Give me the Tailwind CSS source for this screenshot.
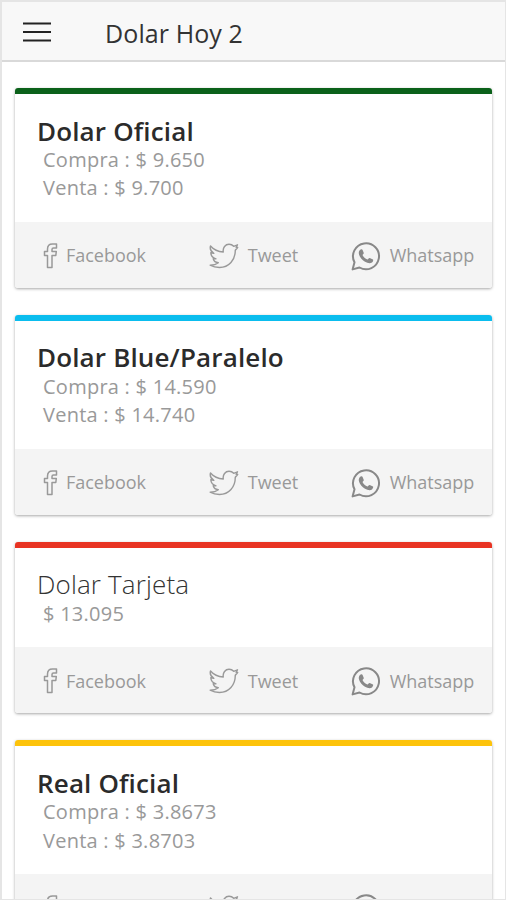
<!DOCTYPE html>
<html lang="es">
<head>
    <meta charset="UTF-8">
    <meta name="viewport" content="width=device-width, initial-scale=1.0">
    <title>Dolar Hoy 2</title>
    <script src="https://cdn.jsdelivr.net/npm/@tailwindcss/browser@4"></script>
</head>
<body class="bg-white font-['Open_Sans','Noto_Sans',sans-serif]">
    <!-- Icons -->
    <svg class="hidden">
        <symbol id="facebook" viewBox="0 0 15 26">
            <path d="M4.500 24.500V12.500H1.500V8.500H4.500V6C4.500 2.500 6.500 1 9.500 1H13.500V5H10.500C9.500 5 9 5.500 9 6.500V8.500H13.300L12.800 12.500H9V24.500Z" fill="none" stroke="currentColor" stroke-width="1.500" stroke-linejoin="round"/>
        </symbol>
        <symbol id="twitter" viewBox="0 0 30 26">
            <path d="M1.500 3C5 7 9.500 8.700 14.300 9C13.500 4.500 16.500 1.300 20 1.300C22 1.300 23.500 2 24.700 3.300L28.500 1.800L27.200 4.400L28.700 4.500L26.300 7.300C26.300 17 20 24.500 10.500 24.500C7 24.500 4 23.800 1.200 22.200C4.700 22.200 7.200 21.500 9.300 19.800C6.500 19.500 4.800 18 4.200 15.800H7C3.500 14.800 2 12.800 1.800 9.800L4.800 10.400C1.800 8.500 0.700 6 1.500 3Z" fill="none" stroke="currentColor" stroke-width="1.400" stroke-linejoin="round"/>
        </symbol>
        <symbol id="whatsapp" viewBox="0 0 30 30">
            <path d="M1.600 28.400L3.500 21.300A13 13 0 1 1 8.500 26.500Z" fill="none" stroke="currentColor" stroke-width="2" stroke-linejoin="round"/>
            <path d="M8.300 9.800C9.300 8 11 7.800 11.500 8.800L12.800 12C12.900 12.700 12 13.500 11.500 14C12.500 16 14.200 17.700 16.500 18.600C17.300 18 18 16.800 18.700 17L22 18.600C22.500 19 22 20.700 21 21.400C19 22.800 16.500 22 14 20.700C11 19 8.800 16 8 13.500C7.700 12 7.700 11 8.300 9.800Z" fill="currentColor"/>
        </symbol>
    </svg>

    <div class="h-screen flex flex-col overflow-hidden border-t-2 border-l-2 border-r border-b border-[#e5e5e5]">
        <!-- Header -->
        <header class="shrink-0 h-[60px] flex items-center bg-[#f8f8f8] border-b-2 border-[#d9d9d9] pl-[21px]">
            <svg class="w-7 h-5 mt-0.5 text-[#222]" viewBox="0 0 28 20">
                <path d="M0 1.500H28M0 10H28M0 18.500H28" stroke="currentColor" stroke-width="2.200"/>
            </svg>
            <h1 class="ml-[54px] pt-1.5 text-[25px] tracking-[0.1px] text-[#333]">Dolar Hoy 2</h1>
        </header>

        <!-- Quotes -->
        <main id="cards" class="flex flex-col gap-[27px] pt-[26px] pl-[13px] pr-[13px]"></main>
    </div>

    <script>
        const quotes = [
            { title: 'Dolar Oficial', bar: 'border-[#0b611a]', weight: 'font-semibold text-[#2b2b2b]', lines: ['Compra : $ 9.650', 'Venta : $ 9.700'] },
            { title: 'Dolar Blue/Paralelo', bar: 'border-[#0bbdee]', weight: 'font-semibold text-[#2b2b2b]', lines: ['Compra : $ 14.590', 'Venta : $ 14.740'] },
            { title: 'Dolar Tarjeta', bar: 'border-[#e83323]', weight: 'font-light text-[#333]', lines: ['$ 13.095'] },
            { title: 'Real Oficial', bar: 'border-[#fdc30b]', weight: 'font-semibold text-[#2b2b2b]', lines: ['Compra : $ 3.8673', 'Venta : $ 3.8703'] }
        ];

        document.getElementById('cards').innerHTML = quotes.map(q => `
            <section class="shrink-0 rounded-[3px] border-t-6 ${q.bar} shadow-[0_1px_3px_rgba(0,0,0,0.35)] overflow-hidden">
                <div class="pt-[21.700px] pb-[19px] pl-[22px]">
                    <h2 class="text-[26px] leading-[30.500px] tracking-[0.150px] ${q.weight}">${q.title}</h2>
                    ${q.lines.map(l => `<p class="pl-[6px] text-[20px] leading-[28.300px] tracking-[0.250px] text-[#999]">${l}</p>`).join('')}
                </div>
                <div class="h-[66px] pt-0.5 grid grid-cols-3 bg-[#f4f4f4] text-[18px] text-[#999]">
                    <div class="flex items-center justify-center gap-2">
                        <svg class="w-[15px] h-[26px]"><use href="#facebook"/></svg>
                        <span>Facebook</span>
                    </div>
                    <div class="flex items-center justify-center gap-[9px]">
                        <svg class="w-[30px] h-[26px]"><use href="#twitter"/></svg>
                        <span>Tweet</span>
                    </div>
                    <div class="flex items-center justify-center gap-[9px]">
                        <svg class="w-[30px] h-[30px] text-[#888]"><use href="#whatsapp"/></svg>
                        <span>Whatsapp</span>
                    </div>
                </div>
            </section>
        `).join('');
    </script>
</body>
</html>
